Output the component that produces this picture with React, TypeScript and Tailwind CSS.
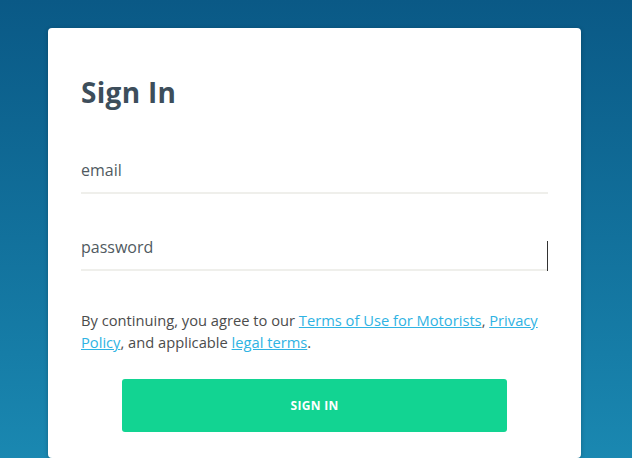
import React from 'react'

export default function App() {
  return (
    <div
      className="flex h-[458px] w-full overflow-hidden bg-gradient-to-b from-[#0a5986] to-[#1a88b1] pl-12 pt-7"
      style={{ fontFamily: '"Open Sans", "Liberation Sans", sans-serif' }}
    >
      <div className="w-[533px] shrink-0 rounded-[4px] bg-white px-[33px] pt-[44px] shadow-[0_1px_4px_rgba(0,0,0,0.25)]">
        {/* Title */}
        <h1 className="text-[28px] font-bold leading-[40px] tracking-[0.3px] text-[#3d4e5b]">Sign In</h1>

        {/* Fields */}
        <div className="mt-[36px] flex flex-col">
          <div className="flex h-[46px] items-center border-b-2 border-[#efefeb] text-[16px] text-[#505a61]">
            email
          </div>
          <div className="relative mt-[31px] flex h-[46px] items-center border-b-2 border-[#efefeb] text-[16px] text-[#505a61]">
            password
            <span className="absolute right-0 top-[16px] h-[30px] w-px bg-[#333]" />
          </div>
        </div>

        {/* Terms */}
        <p className="mt-[38px] text-[14.7px] leading-[22px] text-[#4c4c4c]">
          By continuing, you agree to our{' '}
          <a className="text-[#2fb3e3] underline">Terms of Use for Motorists</a>,{' '}
          <a className="text-[#2fb3e3] underline">Privacy Policy</a>, and applicable{' '}
          <a className="text-[#2fb3e3] underline">legal terms</a>.
        </p>

        {/* Button */}
        <div className="mt-[26px] flex justify-center">
          <button className="h-[53px] w-[385px] rounded-[3px] bg-[#12d492] text-[12px] font-bold tracking-[0.3px] text-white">
            SIGN IN
          </button>
        </div>
      </div>
    </div>
  )
}
